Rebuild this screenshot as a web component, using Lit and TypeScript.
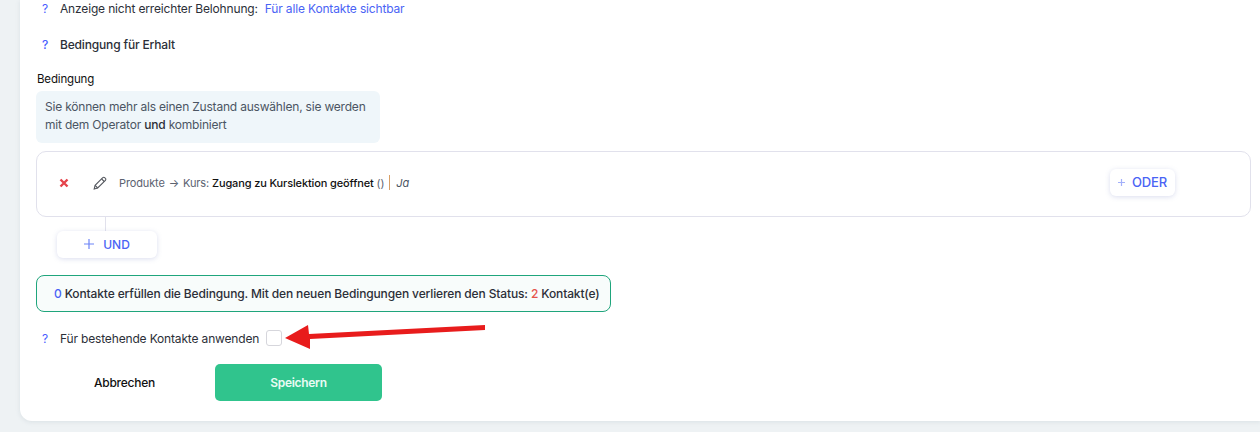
import { LitElement, html, css } from "lit";
import { customElement } from "lit/decorators.js";

@customElement("app-root")
export class AppRoot extends LitElement {
  static styles = css`
    :host {
      display: block;
      height: 432px;
      overflow: hidden;
      background: #eef2f4;
      font-family: Inter, "Liberation Sans", sans-serif;
      font-size: 12px;
      letter-spacing: -0.16px;
      color: #2c2f38;
    }

    .card {
      position: relative;
      box-sizing: border-box;
      height: 421px;
      margin-left: 20px;
      padding: 0 9px 0 16px;
      background: #fff;
      border-radius: 0 0 0 12px;
      box-shadow: 0 1px 4px rgba(160, 175, 185, 0.25);
    }

    .row {
      display: flex;
      align-items: center;
      height: 16px;
      padding-left: 6px;
    }

    .help {
      width: 18px;
      color: #4a5fff;
    }

    .link {
      margin-left: 7px;
      color: #4a63f5;
    }

    .title {
      margin-top: 20px;
      font-weight: 500;
    }

    .label {
      margin-top: 19px;
      padding-left: 1px;
      height: 16px;
      line-height: 16px;
      font-size: 11.5px;
      color: #111;
    }

    .note {
      box-sizing: border-box;
      width: 344px;
      height: 52px;
      margin-top: 4px;
      padding: 7px 9px;
      line-height: 18px;
      letter-spacing: -0.2px;
      background: #eff6fa;
      border-radius: 6px;
      color: #4b5563;
    }

    .note b {
      font-weight: 500;
      color: #2c2f38;
    }

    .rules {
      display: flex;
      align-items: center;
      box-sizing: border-box;
      height: 66px;
      margin-top: 8px;
      padding: 0 75px 0 21px;
      border: 1px solid #e1e1ec;
      border-radius: 10px;
      font-size: 11px;
    }

    .remove {
      width: 12px;
      height: 12px;
      margin-right: 22px;
      margin-top: -3px;
    }

    .edit {
      width: 16px;
      height: 16px;
      margin-right: 11px;
      margin-top: -2px;
    }

    .rule-text {
      margin-top: -3px;
      letter-spacing: -0.13px;
    }

    .path {
      color: #5b6270;
    }

    .to {
      margin: 0 1px;
    }

    .name {
      font-weight: 500;
      color: #111;
    }

    .sep {
      display: inline-block;
      width: 1px;
      height: 15px;
      margin: 0 6px 0 5px;
      background: #d9a066;
      vertical-align: -3px;
    }

    .value {
      font-style: italic;
      color: #4b5563;
    }

    .or {
      display: flex;
      align-items: center;
      box-sizing: border-box;
      height: 27px;
      margin-top: -4px;
      margin-left: auto;
      padding: 0 8px;
      gap: 7px;
      background: #fff;
      border-radius: 6px;
      box-shadow: 0 1px 5px rgba(110, 125, 190, 0.25);
      color: #4a63f5;
      font-size: 13px;
      font-weight: 500;
    }

    .or svg {
      width: 7px;
      height: 7px;
    }

    .connector {
      width: 1px;
      height: 14px;
      margin-left: 69px;
      background: #e1e1ec;
    }

    .and {
      display: flex;
      align-items: center;
      justify-content: center;
      gap: 9px;
      box-sizing: border-box;
      width: 100px;
      height: 27px;
      margin-left: 21px;
      padding-bottom: 1px;
      background: #fff;
      border-radius: 6px;
      box-shadow: 0 1px 5px rgba(110, 125, 190, 0.25);
      color: #4a63f5;
      font-size: 12px;
      font-weight: 500;
      letter-spacing: 0;
    }

    .and svg {
      width: 10px;
      height: 10px;
    }

    .status {
      display: flex;
      align-items: center;
      box-sizing: border-box;
      width: 575px;
      height: 37px;
      margin-top: 17px;
      padding-left: 17px;
      letter-spacing: -0.13px;
      background: #f8fcfb;
      border: 1px solid #1fa57c;
      border-radius: 8px;
      font-weight: 500;
    }

    .zero {
      color: #4a63f5;
    }

    .two {
      color: #e5534b;
    }

    .apply {
      margin-top: 18px;
    }

    .check {
      box-sizing: border-box;
      width: 16px;
      height: 16px;
      margin-left: 7px;
      border: 1px solid #d6d6dc;
      border-radius: 3px;
      background: #fff;
    }

    .actions {
      display: flex;
      align-items: center;
      margin-top: 18px;
    }

    .cancel {
      width: 177px;
      margin-right: 2px;
      text-align: center;
      letter-spacing: -0.25px;
      color: #111;
      font-weight: 500;
    }

    .save {
      display: flex;
      align-items: center;
      justify-content: center;
      width: 167px;
      height: 37px;
      background: #30c48d;
      border-radius: 5px;
      letter-spacing: -0.3px;
      color: #e9fbf4;
      font-weight: 600;
    }

    .arrow {
      position: absolute;
      left: 0;
      top: 0;
      width: 520px;
      height: 360px;
      pointer-events: none;
    }
  `;

  render() {
    return html`<div class="card">
      <div class="row">
        <span class="help">?</span>
        <span>Anzeige nicht erreichter Belohnung:</span>
        <span class="link">Für alle Kontakte sichtbar</span>
      </div>
      <div class="row title">
        <span class="help">?</span>
        <span>Bedingung für Erhalt</span>
      </div>
      <div class="label">Bedingung</div>
      <div class="note">
        Sie können mehr als einen Zustand auswählen, sie werden<br />
        mit dem Operator <b>und</b> kombiniert
      </div>
      <div class="rules">
        <svg class="remove" viewBox="0 0 12 12">
          <path d="M2.500 2.500l7 7M9.500 2.500l-7 7" stroke="#e5434b" stroke-width="2.400" fill="none" />
        </svg>
        <svg class="edit" viewBox="0 0 16 16" fill="none" stroke="#55585f" stroke-width="1.100">
          <path d="M2.200 14l.9-3.600L10.800 2.700a1.300 1.300 0 0 1 1.900 0l.7.7a1.300 1.300 0 0 1 0 1.900L5.700 13z" />
          <path d="M3.100 10.400L5.700 13M9.600 3.900l2.600 2.600" />
        </svg>
        <span class="rule-text">
          <span class="path">Produkte <span class="to">→</span> Kurs:</span>
          <span class="name">Zugang zu Kurslektion geöffnet</span>
          <span class="path">()</span><span class="sep"></span><span class="value">Ja</span>
        </span>
        <div class="or">
          <svg viewBox="0 0 7 7"><path d="M3.500 0v7M0 3.500h7" stroke="#a3b0fa" stroke-width="1.200" /></svg>
          ODER
        </div>
      </div>
      <div class="connector"></div>
      <div class="and">
        <svg viewBox="0 0 10 10"><path d="M5 0v10M0 5h10" stroke="#6d84f7" stroke-width="1.200" /></svg>
        UND
      </div>
      <div class="status">
        <span><span class="zero">0</span> Kontakte erfüllen die Bedingung. Mit den neuen Bedingungen verlieren den Status: <span class="two">2</span> Kontakt(e)</span>
      </div>
      <div class="row apply">
        <span class="help">?</span>
        <span>Für bestehende Kontakte anwenden</span>
        <span class="check"></span>
      </div>
      <div class="actions">
        <span class="cancel">Abbrechen</span>
        <span class="save">Speichern</span>
      </div>
      <svg class="arrow" viewBox="20 0 520 360">
        <path d="M285 338L308 325L309 334L485 325L485 330L310 339L310 349Z" fill="#e81c1c" />
      </svg>
    </div>`;
  }
}
